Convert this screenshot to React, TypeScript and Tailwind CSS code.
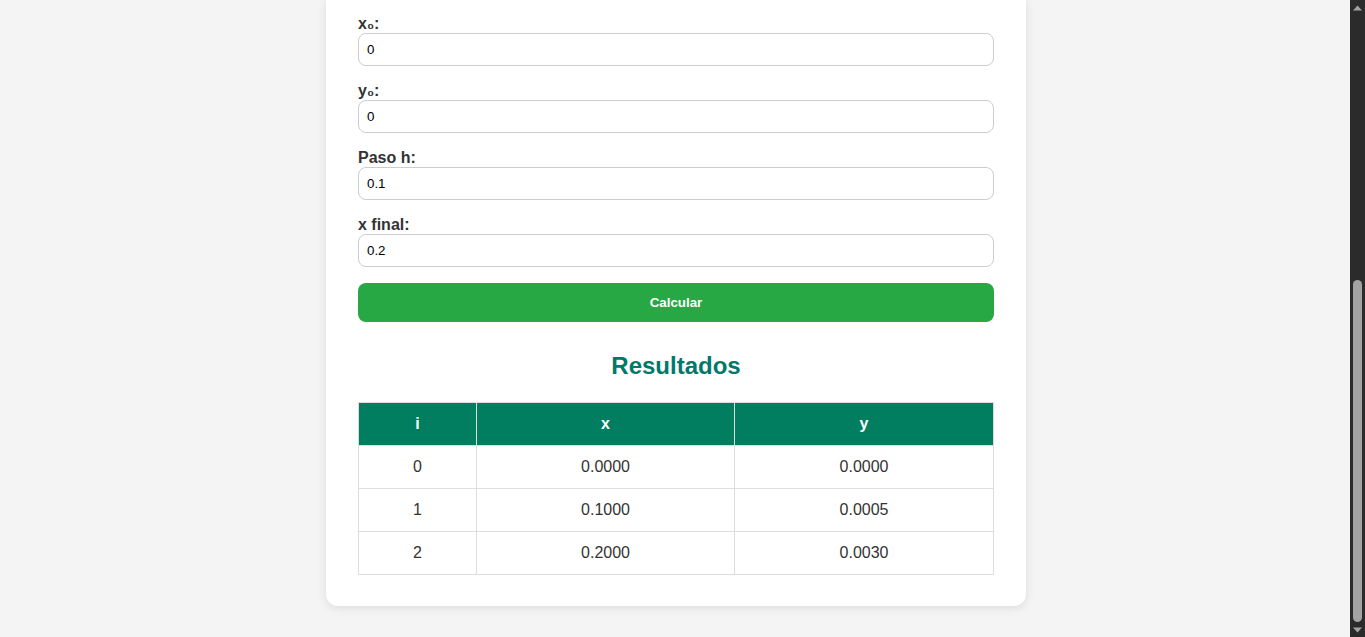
const fields = [
  { label: "x₀:", value: "0" },
  { label: "y₀:", value: "0" },
  { label: "Paso h:", value: "0.1" },
  { label: "x final:", value: "0.2" },
];

const rows = [
  { i: 0, x: "0.0000", y: "0.0000" },
  { i: 1, x: "0.1000", y: "0.0005" },
  { i: 2, x: "0.2000", y: "0.0030" },
];

function Scrollbar() {
  return (
    <div className="flex h-full w-[15px] shrink-0 flex-col bg-[#2b2b2b]">
      {/* up arrow */}
      <div className="flex h-[15px] items-center justify-center">
        <svg width="9" height="6" viewBox="0 0 9 6">
          <path d="M0 5.5 L4.5 0.5 L9 5.5 Z" fill="#a3a3a3" />
        </svg>
      </div>
      {/* track */}
      <div className="flex flex-1 flex-col items-center justify-end">
        <div className="h-[342px] w-[9px] rounded-full bg-[#a3a3a3]" />
      </div>
      {/* down arrow */}
      <div className="flex h-[15px] items-center justify-center">
        <svg width="9" height="6" viewBox="0 0 9 6">
          <path d="M0 0.5 L4.5 5.5 L9 0.5 Z" fill="#a3a3a3" />
        </svg>
      </div>
    </div>
  );
}

export default function App() {
  return (
    <div className="flex h-[637px] w-full overflow-hidden bg-[#f4f4f4] font-['Liberation_Sans',Arial,sans-serif] text-[#333]">
      <div className="flex flex-1 justify-center pl-[2px]">
        {/* Card (top scrolled out of view) */}
        <div className="w-[700px] self-start rounded-b-xl bg-white px-8 pt-[15px] pb-[31px] shadow-[0_2px_10px_rgba(0,0,0,0.1)]">
          {fields.map((f) => (
            <div key={f.label} className="mb-4">
              <label className="block text-[16px] font-bold leading-[18px]">
                {f.label}
              </label>
              <input
                readOnly
                value={f.value}
                className="block h-[33px] w-full rounded-lg border border-[#ccc] bg-white px-2 text-[13.33px] text-black outline-none"
              />
            </div>
          ))}

          <button className="block h-[39px] w-full rounded-lg bg-[#28a745] text-[13.33px] font-bold text-white">
            Calcular
          </button>

          <h2 className="mt-[30px] mb-[22px] text-center text-[24px] font-bold leading-[28px] text-[#00796b]">
            Resultados
          </h2>

          <table className="w-full border-collapse text-center text-[16px] leading-[18px]">
            <thead>
              <tr className="bg-[#007e5f] text-white">
                <th className="w-[118px] border border-[#ddd] py-3 font-bold">i</th>
                <th className="w-[258px] border border-[#ddd] py-3 font-bold">x</th>
                <th className="border border-[#ddd] py-3 font-bold">y</th>
              </tr>
            </thead>
            <tbody>
              {rows.map((r) => (
                <tr key={r.i}>
                  <td className="border border-[#ddd] py-3">{r.i}</td>
                  <td className="border border-[#ddd] py-3">{r.x}</td>
                  <td className="border border-[#ddd] py-3">{r.y}</td>
                </tr>
              ))}
            </tbody>
          </table>
        </div>
      </div>
      <Scrollbar />
    </div>
  );
}
